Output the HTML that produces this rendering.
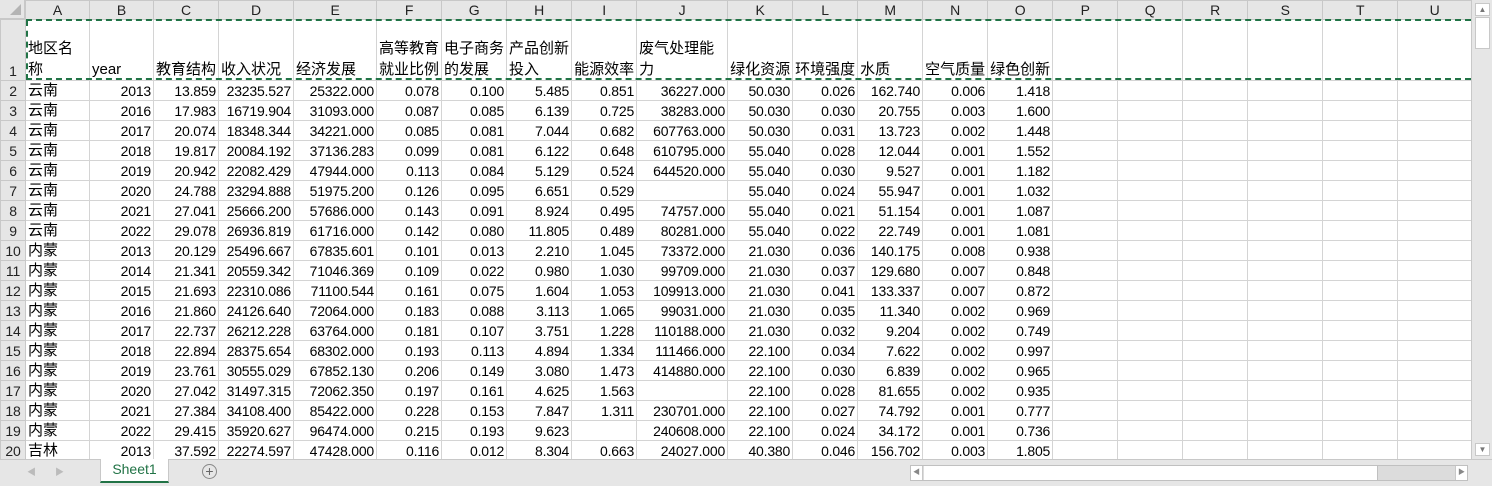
<!DOCTYPE html>
<html><head><meta charset="utf-8"><style>
*{margin:0;padding:0;box-sizing:border-box}
body{width:1492px;height:486px;overflow:hidden;background:#fff;font-family:"Liberation Sans","Noto Sans CJK SC",sans-serif;font-size:14px;color:#000;position:relative}
table{border-collapse:collapse;table-layout:fixed;position:absolute;left:0;top:0}
td{border:1px solid #d4d4d4;height:20px;padding:0 2px;white-space:nowrap;overflow:hidden;text-align:right;line-height:18px;letter-spacing:-0.2px}
td.t{text-align:left;font-size:15px;letter-spacing:0}
tr.h td{background:#e6e6e6;text-align:center;border-color:#c8c8c8;height:19px;color:#222;font-size:14px}
td.rn{background:#e6e6e6;text-align:center;border-color:#c8c8c8;padding:0;color:#222;font-size:14px}
tr.r1 td{height:61px;vertical-align:bottom;text-align:left;line-height:21px;font-size:15px;letter-spacing:0;padding:0 2px}
tr.r1 td.rn{text-align:center;line-height:18px;font-size:14px}
.dash{position:absolute;border-top:2px dashed #217346}
.bar{position:absolute;left:0;top:459px;width:1492px;height:27px;background:#e6e6e6;border-top:1px solid #c8c8c8}
</style></head><body>
<table>
<colgroup><col style="width:25px"><col style="width:64px"><col style="width:64px"><col style="width:65px"><col style="width:75px"><col style="width:83px"><col style="width:65px"><col style="width:65px"><col style="width:65px"><col style="width:65px"><col style="width:91px"><col style="width:65px"><col style="width:65px"><col style="width:65px"><col style="width:65px"><col style="width:65px"><col style="width:65px"><col style="width:65px"><col style="width:65px"><col style="width:75px"><col style="width:75px"><col style="width:74px"></colgroup>
<tr class="h"><td></td><td>A</td><td>B</td><td>C</td><td>D</td><td>E</td><td>F</td><td>G</td><td>H</td><td>I</td><td>J</td><td>K</td><td>L</td><td>M</td><td>N</td><td>O</td><td>P</td><td>Q</td><td>R</td><td>S</td><td>T</td><td>U</td></tr>
<tr class="r1"><td class="rn">1</td><td>地区名<br>称</td><td>year</td><td>教育结构</td><td>收入状况</td><td>经济发展</td><td>高等教育<br>就业比例</td><td>电子商务<br>的发展</td><td>产品创新<br>投入</td><td>能源效率</td><td>废气处理能<br>力</td><td>绿化资源</td><td>环境强度</td><td>水质</td><td>空气质量</td><td>绿色创新</td><td></td><td></td><td></td><td></td><td></td><td></td></tr>
<tr><td class="rn">2</td><td class="t">云南</td><td>2013</td><td>13.859</td><td>23235.527</td><td>25322.000</td><td>0.078</td><td>0.100</td><td>5.485</td><td>0.851</td><td>36227.000</td><td>50.030</td><td>0.026</td><td>162.740</td><td>0.006</td><td>1.418</td><td></td><td></td><td></td><td></td><td></td><td></td></tr>
<tr><td class="rn">3</td><td class="t">云南</td><td>2016</td><td>17.983</td><td>16719.904</td><td>31093.000</td><td>0.087</td><td>0.085</td><td>6.139</td><td>0.725</td><td>38283.000</td><td>50.030</td><td>0.030</td><td>20.755</td><td>0.003</td><td>1.600</td><td></td><td></td><td></td><td></td><td></td><td></td></tr>
<tr><td class="rn">4</td><td class="t">云南</td><td>2017</td><td>20.074</td><td>18348.344</td><td>34221.000</td><td>0.085</td><td>0.081</td><td>7.044</td><td>0.682</td><td>607763.000</td><td>50.030</td><td>0.031</td><td>13.723</td><td>0.002</td><td>1.448</td><td></td><td></td><td></td><td></td><td></td><td></td></tr>
<tr><td class="rn">5</td><td class="t">云南</td><td>2018</td><td>19.817</td><td>20084.192</td><td>37136.283</td><td>0.099</td><td>0.081</td><td>6.122</td><td>0.648</td><td>610795.000</td><td>55.040</td><td>0.028</td><td>12.044</td><td>0.001</td><td>1.552</td><td></td><td></td><td></td><td></td><td></td><td></td></tr>
<tr><td class="rn">6</td><td class="t">云南</td><td>2019</td><td>20.942</td><td>22082.429</td><td>47944.000</td><td>0.113</td><td>0.084</td><td>5.129</td><td>0.524</td><td>644520.000</td><td>55.040</td><td>0.030</td><td>9.527</td><td>0.001</td><td>1.182</td><td></td><td></td><td></td><td></td><td></td><td></td></tr>
<tr><td class="rn">7</td><td class="t">云南</td><td>2020</td><td>24.788</td><td>23294.888</td><td>51975.200</td><td>0.126</td><td>0.095</td><td>6.651</td><td>0.529</td><td></td><td>55.040</td><td>0.024</td><td>55.947</td><td>0.001</td><td>1.032</td><td></td><td></td><td></td><td></td><td></td><td></td></tr>
<tr><td class="rn">8</td><td class="t">云南</td><td>2021</td><td>27.041</td><td>25666.200</td><td>57686.000</td><td>0.143</td><td>0.091</td><td>8.924</td><td>0.495</td><td>74757.000</td><td>55.040</td><td>0.021</td><td>51.154</td><td>0.001</td><td>1.087</td><td></td><td></td><td></td><td></td><td></td><td></td></tr>
<tr><td class="rn">9</td><td class="t">云南</td><td>2022</td><td>29.078</td><td>26936.819</td><td>61716.000</td><td>0.142</td><td>0.080</td><td>11.805</td><td>0.489</td><td>80281.000</td><td>55.040</td><td>0.022</td><td>22.749</td><td>0.001</td><td>1.081</td><td></td><td></td><td></td><td></td><td></td><td></td></tr>
<tr><td class="rn">10</td><td class="t">内蒙</td><td>2013</td><td>20.129</td><td>25496.667</td><td>67835.601</td><td>0.101</td><td>0.013</td><td>2.210</td><td>1.045</td><td>73372.000</td><td>21.030</td><td>0.036</td><td>140.175</td><td>0.008</td><td>0.938</td><td></td><td></td><td></td><td></td><td></td><td></td></tr>
<tr><td class="rn">11</td><td class="t">内蒙</td><td>2014</td><td>21.341</td><td>20559.342</td><td>71046.369</td><td>0.109</td><td>0.022</td><td>0.980</td><td>1.030</td><td>99709.000</td><td>21.030</td><td>0.037</td><td>129.680</td><td>0.007</td><td>0.848</td><td></td><td></td><td></td><td></td><td></td><td></td></tr>
<tr><td class="rn">12</td><td class="t">内蒙</td><td>2015</td><td>21.693</td><td>22310.086</td><td>71100.544</td><td>0.161</td><td>0.075</td><td>1.604</td><td>1.053</td><td>109913.000</td><td>21.030</td><td>0.041</td><td>133.337</td><td>0.007</td><td>0.872</td><td></td><td></td><td></td><td></td><td></td><td></td></tr>
<tr><td class="rn">13</td><td class="t">内蒙</td><td>2016</td><td>21.860</td><td>24126.640</td><td>72064.000</td><td>0.183</td><td>0.088</td><td>3.113</td><td>1.065</td><td>99031.000</td><td>21.030</td><td>0.035</td><td>11.340</td><td>0.002</td><td>0.969</td><td></td><td></td><td></td><td></td><td></td><td></td></tr>
<tr><td class="rn">14</td><td class="t">内蒙</td><td>2017</td><td>22.737</td><td>26212.228</td><td>63764.000</td><td>0.181</td><td>0.107</td><td>3.751</td><td>1.228</td><td>110188.000</td><td>21.030</td><td>0.032</td><td>9.204</td><td>0.002</td><td>0.749</td><td></td><td></td><td></td><td></td><td></td><td></td></tr>
<tr><td class="rn">15</td><td class="t">内蒙</td><td>2018</td><td>22.894</td><td>28375.654</td><td>68302.000</td><td>0.193</td><td>0.113</td><td>4.894</td><td>1.334</td><td>111466.000</td><td>22.100</td><td>0.034</td><td>7.622</td><td>0.002</td><td>0.997</td><td></td><td></td><td></td><td></td><td></td><td></td></tr>
<tr><td class="rn">16</td><td class="t">内蒙</td><td>2019</td><td>23.761</td><td>30555.029</td><td>67852.130</td><td>0.206</td><td>0.149</td><td>3.080</td><td>1.473</td><td>414880.000</td><td>22.100</td><td>0.030</td><td>6.839</td><td>0.002</td><td>0.965</td><td></td><td></td><td></td><td></td><td></td><td></td></tr>
<tr><td class="rn">17</td><td class="t">内蒙</td><td>2020</td><td>27.042</td><td>31497.315</td><td>72062.350</td><td>0.197</td><td>0.161</td><td>4.625</td><td>1.563</td><td></td><td>22.100</td><td>0.028</td><td>81.655</td><td>0.002</td><td>0.935</td><td></td><td></td><td></td><td></td><td></td><td></td></tr>
<tr><td class="rn">18</td><td class="t">内蒙</td><td>2021</td><td>27.384</td><td>34108.400</td><td>85422.000</td><td>0.228</td><td>0.153</td><td>7.847</td><td>1.311</td><td>230701.000</td><td>22.100</td><td>0.027</td><td>74.792</td><td>0.001</td><td>0.777</td><td></td><td></td><td></td><td></td><td></td><td></td></tr>
<tr><td class="rn">19</td><td class="t">内蒙</td><td>2022</td><td>29.415</td><td>35920.627</td><td>96474.000</td><td>0.215</td><td>0.193</td><td>9.623</td><td></td><td>240608.000</td><td>22.100</td><td>0.024</td><td>34.172</td><td>0.001</td><td>0.736</td><td></td><td></td><td></td><td></td><td></td><td></td></tr>
<tr><td class="rn">20</td><td class="t">吉林</td><td>2013</td><td>37.592</td><td>22274.597</td><td>47428.000</td><td>0.116</td><td>0.012</td><td>8.304</td><td>0.663</td><td>24027.000</td><td>40.380</td><td>0.046</td><td>156.702</td><td>0.003</td><td>1.805</td><td></td><td></td><td></td><td></td><td></td><td></td></tr>
</table>
<div class="dash" style="left:26px;top:19px;width:1445px"></div>
<div class="dash" style="left:26px;top:78px;width:1445px"></div>
<div style="position:absolute;left:26px;top:20px;height:60px;border-left:2px dashed #217346"></div>
<div style="position:absolute;left:0;top:0;width:25px;height:19px;background:#e6e6e6;border-right:1px solid #c8c8c8;border-bottom:1px solid #c8c8c8"><div style="position:absolute;right:3px;bottom:3px;width:0;height:0;border-left:11px solid transparent;border-bottom:11px solid #b4b4b4"></div></div>
<div style="position:absolute;left:1471px;top:0;width:21px;height:459px;background:#e6e6e6;border-left:1px solid #c8c8c8">
<div style="position:absolute;left:3px;top:3px;width:15px;height:13px;background:#fff;border:1px solid #c8c8c8;font-size:8px;color:#777;text-align:center;line-height:11px">▲</div>
<div style="position:absolute;left:3px;top:17px;width:15px;height:32px;background:#fff;border:1px solid #c8c8c8"></div>
<div style="position:absolute;left:3px;top:443px;width:15px;height:13px;background:#fff;border:1px solid #c8c8c8;font-size:8px;color:#777;text-align:center;line-height:11px">▼</div>
</div>
<div class="bar">
<span style="position:absolute;left:27px;top:5px;color:#bbb;font-size:9px">◀</span>
<span style="position:absolute;left:55px;top:5px;color:#bbb;font-size:9px">▶</span>
<div style="position:absolute;left:100px;top:-1px;width:69px;height:24px;background:#fff;border:1px solid #c8c8c8;border-top:none;border-bottom:2px solid #217346;color:#217346;text-align:center;line-height:20px;font-size:14px">Sheet1</div>
<div style="position:absolute;left:202px;top:4px;width:15px;height:15px;border:1px solid #888;border-radius:50%;color:#666;text-align:center;line-height:12px;font-size:14px">+</div>
<div style="position:absolute;left:910px;top:5px;width:558px;height:16px;background:#dcdcdc;border:1px solid #c0c0c0">
<div style="position:absolute;left:0;top:0;width:12px;height:14px;background:#fff;border-right:1px solid #c8c8c8;font-size:7px;color:#888;text-align:center;line-height:14px">◀</div>
<div style="position:absolute;left:13px;top:0;width:454px;height:14px;background:#fff;border-right:1px solid #c0c0c0"></div>
<div style="position:absolute;right:0;top:0;width:12px;height:14px;background:#fff;border-left:1px solid #c8c8c8;font-size:7px;color:#888;text-align:center;line-height:14px">▶</div>
</div>
</div>
</body></html>
